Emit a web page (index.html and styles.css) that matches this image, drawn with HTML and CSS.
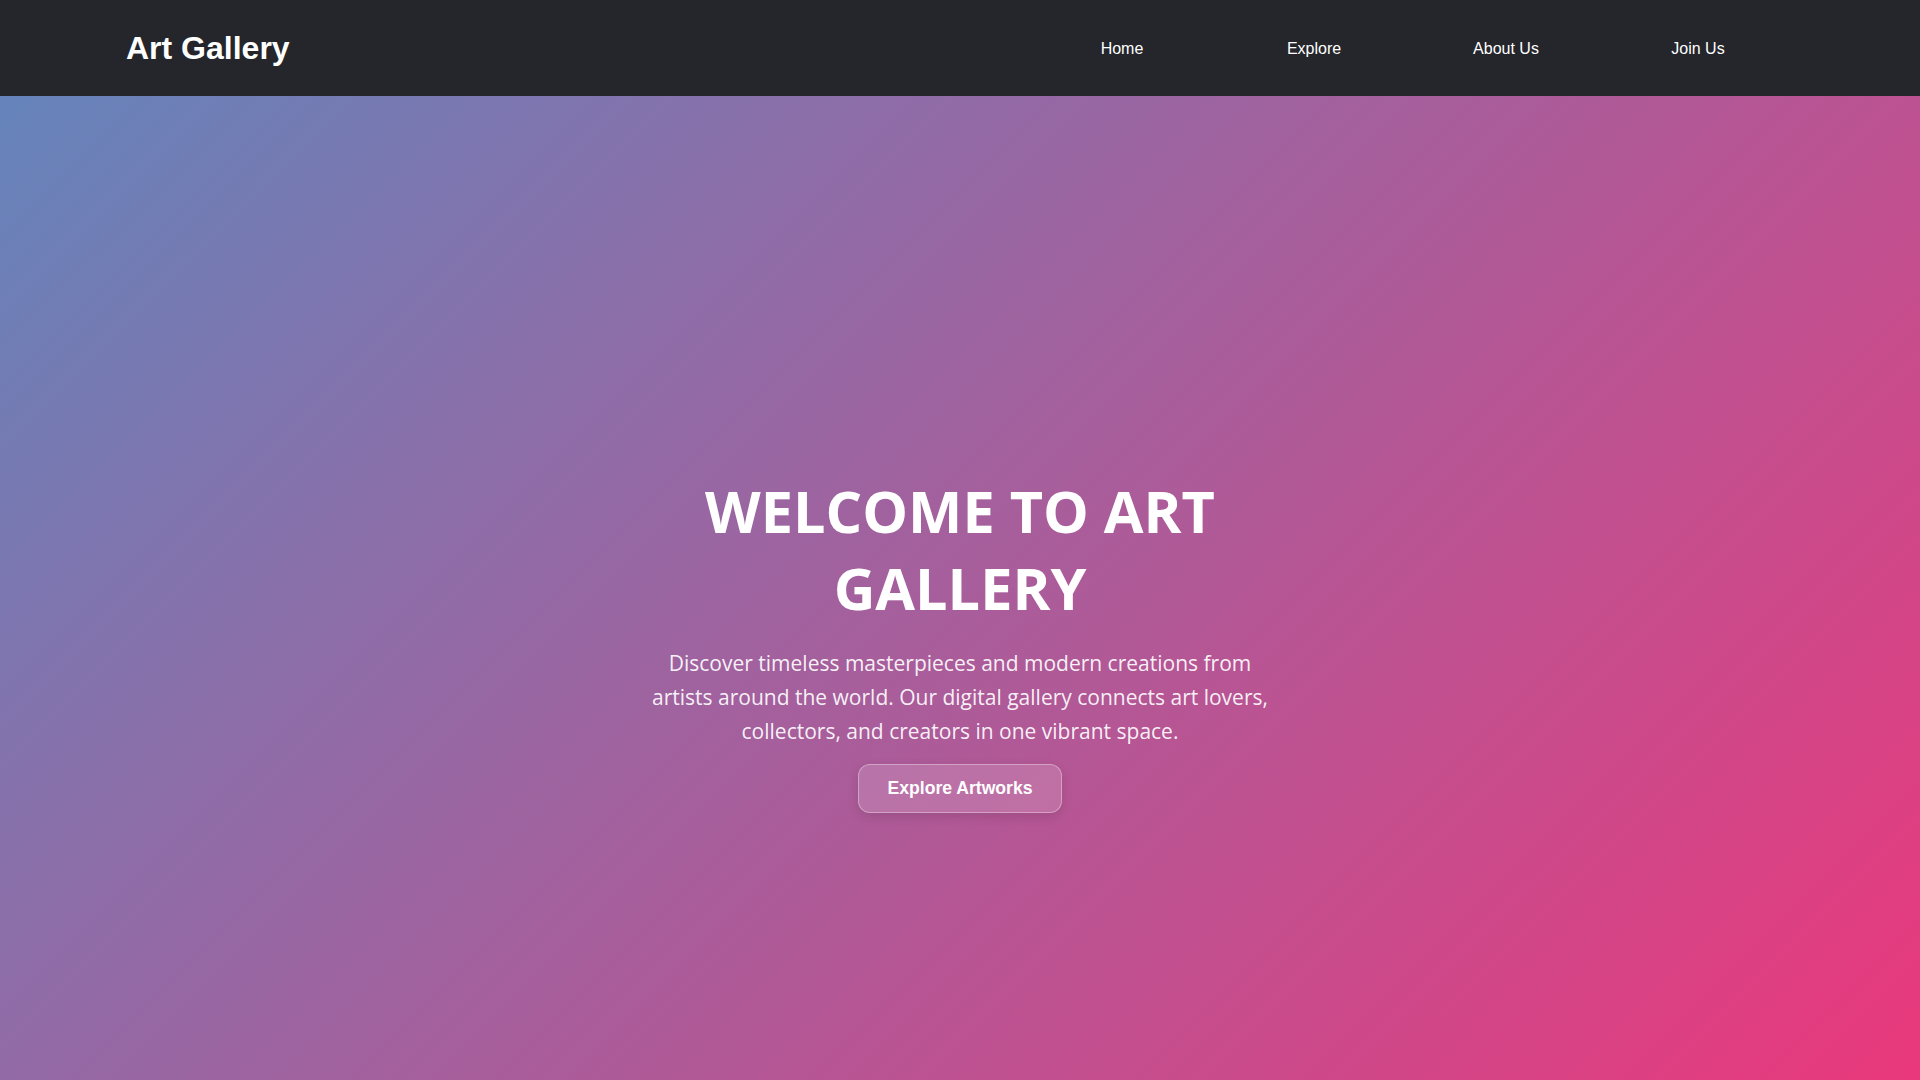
FILE: index.html
```html
<!DOCTYPE html>
<html lang="en">
<head>
<meta charset="UTF-8">
<title>Art Gallery</title>
<link rel="stylesheet" href="styles.css">
</head>
<body>
  <header class="navbar">
    <div class="logo">Art Gallery</div>
    <nav>
      <ul class="nav-links">
        <li><a href="#">Home</a></li>
        <li><a href="#">Explore</a></li>
        <li><a href="#">About Us</a></li>
        <li><a href="#">Join Us</a></li>
      </ul>
    </nav>
  </header>
  <section class="hero">
    <div class="hero-content">
      <h1 class="hero-title">Welcome to Art Gallery</h1>
      <p class="hero-text">Discover timeless masterpieces and modern creations from artists around the world. Our digital gallery connects art lovers, collectors, and creators in one vibrant space.</p>
      <a href="#" class="hero-btn">Explore Artworks</a>
    </div>
  </section>
  <section class="gallery"></section>
</body>
</html>
```
FILE: styles.css
```css
* {
  box-sizing: border-box;
}

html::-webkit-scrollbar {
  width: 4px;
}
html::-webkit-scrollbar-track {
  background: transparent;
}
html::-webkit-scrollbar-thumb {
  background: rgba(130, 130, 130, 0.85);
}

body {
  margin: 0;
  font-family: "Liberation Sans", Arial, sans-serif;
  background: #24262b;
  color: #fff;
}

.navbar {
  height: 96px;
  background: #24262b;
  display: flex;
  align-items: center;
  justify-content: space-between;
  padding: 2px 126px 0;
}

.logo {
  font-size: 32px;
  font-weight: 700;
  color: #fff;
  margin-bottom: 2px;
}

.nav-links {
  list-style: none;
  margin: 0;
  padding: 0;
  display: flex;
}

.nav-links li {
  width: 192px;
  text-align: center;
}

.nav-links a {
  color: #fff;
  text-decoration: none;
  font-size: 16px;
}

.hero {
  height: 1080px;
  background: linear-gradient(135deg, #6584bb 0%, #ee367a 100%);
  display: flex;
  align-items: center;
  justify-content: center;
  padding-top: 13px;
  text-align: center;
}

.hero-content {
  max-width: 630px;
  display: flex;
  flex-direction: column;
  align-items: center;
}

.hero-title {
  font-family: "Open Sans", sans-serif;
  font-weight: 700;
  font-size: 57.6px;
  line-height: 77px;
  text-transform: uppercase;
  margin: 0 0 21.5px;
  color: #fff;
}

.hero-text {
  font-family: "Open Sans", sans-serif;
  font-size: 21px;
  line-height: 33.7px;
  margin: 0 0 15.5px;
  color: rgba(255, 255, 255, 0.92);
}

.hero-btn {
  display: inline-block;
  padding: 13px 28.8px;
  font-size: 17.6px;
  font-weight: 700;
  color: #fff;
  text-decoration: none;
  background: rgba(255, 255, 255, 0.15);
  border: 1px solid rgba(255, 255, 255, 0.35);
  border-radius: 12px;
  box-shadow: 0 4px 12px rgba(0, 0, 0, 0.12);
}

.gallery {
  min-height: 1265px;
  background: #24262b;
}
```
